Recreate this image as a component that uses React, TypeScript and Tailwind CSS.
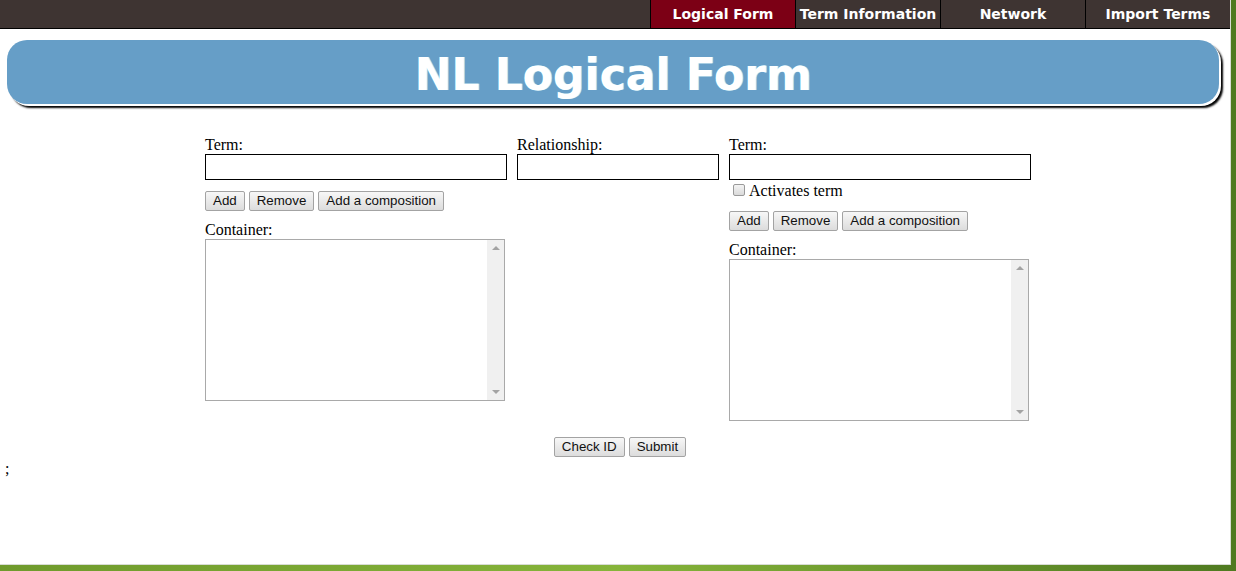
import React from 'react';

const serif = { fontFamily: '"Liberation Serif", "Times New Roman", serif' };

const tabs = ['Logical Form', 'Term Information', 'Network', 'Import Terms'];

const Btn: React.FC<{ label: string }> = ({ label }) => (
  <button
    type="button"
    className="h-[20px] px-[7px] border border-[#a3a3a3] rounded-[2px] bg-gradient-to-b from-[#f7f7f7] to-[#dcdcdc] text-[13.33px] leading-[16px] text-[#111] font-['Liberation_Sans',Arial,sans-serif]"
  >
    {label}
  </button>
);

const Container: React.FC = () => (
  <div className="w-[300px] h-[162px] border border-[#a9a9a9] flex bg-white">
    <div className="flex-1" />
    <div className="w-[17px] bg-[#f0f0f0] flex flex-col items-center justify-between py-[6px]">
      <div className="w-0 h-0 border-l-[4px] border-r-[4px] border-b-[4px] border-l-transparent border-r-transparent border-b-[#a3a3a3]" />
      <div className="w-0 h-0 border-l-[4px] border-r-[4px] border-t-[4px] border-l-transparent border-r-transparent border-t-[#a3a3a3]" />
    </div>
  </div>
);

const Field: React.FC<{ width: string }> = ({ width }) => (
  <div className={`${width} h-[26px] border border-black bg-white`} />
);

export default function App() {
  return (
    <div className="w-[1236px] h-[571px] bg-gradient-to-r from-[#6f9a2c] via-[#86b43a] to-[#4f7a20] overflow-hidden">
      <div className="w-[1231px] h-[565px] bg-white border-r border-b border-[#d8dcd4] relative">
        {/* nav */}
        <div className="h-[29px] bg-[#3e3432] border-b border-black flex justify-end">
          {tabs.map((t, i) => (
            <div
              key={t}
              className={`w-[145px] h-full border-l border-black flex items-center justify-center text-white text-[14px] font-bold font-['DejaVu_Sans',Verdana,sans-serif] ${i === 0 ? 'bg-[#7c0015]' : ''}`}
            >
              {t}
            </div>
          ))}
        </div>

        {/* banner */}
        <div className="mt-[11px] ml-[7px] w-[1212px] h-[64px] pt-[5px] rounded-[20px] bg-[#669ec7] shadow-[2px_2px_0_#ffffff,4px_4px_2px_#000000] flex items-center justify-center">
          <span className="text-white text-[44px] font-bold leading-none font-['DejaVu_Sans',Verdana,sans-serif] [text-shadow:1px_0_0_#bff0fa]">
            NL Logical Form
          </span>
        </div>

        {/* form */}
        <div className="mt-[32px] flex justify-center gap-[10px] text-[16px] leading-[18px] text-black pl-[6px]" style={serif}>
          <div className="flex flex-col">
            <div>Term:</div>
            <Field width="w-[302px]" />
            <div className="flex gap-[4px] mt-[11px]">
              <Btn label="Add" />
              <Btn label="Remove" />
              <Btn label="Add a composition" />
            </div>
            <div className="mt-[10px]">Container:</div>
            <Container />
          </div>
          <div className="flex flex-col">
            <div>Relationship:</div>
            <Field width="w-[202px]" />
          </div>
          <div className="flex flex-col">
            <div>Term:</div>
            <Field width="w-[302px]" />
            <div className="flex items-end h-[20px]">
              <span className="ml-[4px] mr-[4px] mb-[4px] w-[12px] h-[12px] border border-[#9a9a9a] rounded-[2px] bg-gradient-to-b from-[#f4f4f4] to-[#dadada]" />
              <span>Activates term</span>
            </div>
            <div className="flex gap-[4px] mt-[11px]">
              <Btn label="Add" />
              <Btn label="Remove" />
              <Btn label="Add a composition" />
            </div>
            <div className="mt-[10px]">Container:</div>
            <Container />
          </div>
        </div>

        <div className="mt-[16px] flex justify-center gap-[4px] pl-[10px]">
          <Btn label="Check ID" />
          <Btn label="Submit" />
        </div>
        <div className="mt-[3px] pl-[5px] text-[16px] leading-[18px]" style={serif}>;</div>
      </div>
    </div>
  );
}
